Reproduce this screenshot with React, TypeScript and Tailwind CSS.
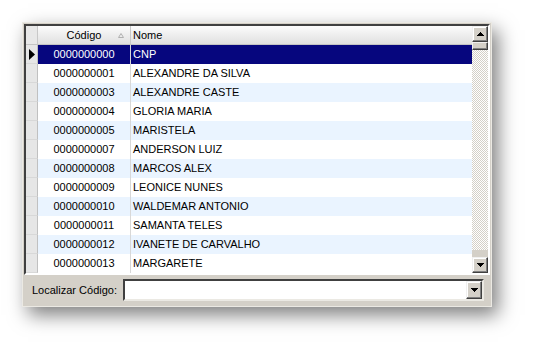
import React from "react";

const rows = [
  ["0000000000", "CNP"],
  ["0000000001", "ALEXANDRE DA SILVA"],
  ["0000000003", "ALEXANDRE CASTE"],
  ["0000000004", "GLORIA MARIA"],
  ["0000000005", "MARISTELA"],
  ["0000000007", "ANDERSON LUIZ"],
  ["0000000008", "MARCOS ALEX"],
  ["0000000009", "LEONICE NUNES"],
  ["0000000010", "WALDEMAR ANTONIO"],
  ["0000000011", "SAMANTA TELES"],
  ["0000000012", "IVANETE DE CARVALHO"],
  ["0000000013", "MARGARETE"],
];

function Arrow({ down }: { down?: boolean }) {
  return (
    <svg width="7" height="4" viewBox="0 0 7 4" shapeRendering="crispEdges">
      {down ? <polygon points="0,0 7,0 3.5,4" fill="#000" /> : <polygon points="0,4 7,4 3.5,0" fill="#000" />}
    </svg>
  );
}

function Btn({ down, h = 16 }: { down?: boolean; h?: number }) {
  return (
    <div
      className="w-[16px] bg-[#d4d0c8] border border-t-[#f0f0f0] border-l-[#f0f0f0] border-r-[#404040] border-b-[#404040] flex items-center justify-center shadow-[inset_-1px_-1px_0_#808080,inset_1px_1px_0_#ffffff]"
      style={{ height: h }}
    >
      <Arrow down={down} />
    </div>
  );
}

export default function App() {
  return (
    <div className="w-[535px] h-[350px] bg-white pt-[22px] pl-[22px]" style={{ fontFamily: '"Liberation Sans", Arial, sans-serif' }}>
      <div className="w-[470px] h-[285px] bg-[#d4d0c8] border border-[#ebe9e3] shadow-[6px_8px_18px_rgba(0,0,0,0.5)] flex flex-col p-[1px]">
        <div className="h-[251px] border-2 border-t-[#404040] border-l-[#404040] border-r-white border-b-white flex">
          <div className="flex-1 flex flex-col bg-white text-[11px] text-black">
            <div className="h-[19px] flex bg-gradient-to-b from-[#fcfcfc] to-[#e0e0e0] border-b border-[#c4c4c4]">
              <div className="w-[12px] border-r border-[#c8c8c8] bg-[#e8e8e8]" />
              <div className="w-[93px] border-r border-[#c8c8c8] relative flex items-center justify-center">
                <span>Código</span>
                <svg className="absolute right-[6px] top-[7px]" width="6" height="5" viewBox="0 0 6 5">
                  <polygon points="0.5,4.5 5.5,4.5 3,0.5" fill="none" stroke="#b0b0b0" strokeWidth="1" />
                </svg>
              </div>
              <div className="flex-1 flex items-center pl-[2px]">Nome</div>
            </div>
            {rows.map((r, i) => {
              const sel = i === 0;
              const bg = sel ? "bg-[#06067e] text-white" : i % 2 === 0 ? "bg-[#eaf4ff]" : "bg-white";
              return (
                <div key={i} className="h-[19px] flex">
                  <div className="w-[12px] bg-[#e6e6e6] border-r border-b border-r-[#c0c0c0] border-b-[#d8d8d8] flex items-center justify-center">
                    {sel && (
                      <svg width="6" height="11" viewBox="0 0 6 11">
                        <polygon points="0,0 6,5.5 0,11" fill="#000" />
                      </svg>
                    )}
                  </div>
                  <div className={`w-[93px] flex items-center justify-center border-r border-[#d8d8d8] ${bg}`}>{r[0]}</div>
                  <div className={`flex-1 flex items-center pl-[2px] ${bg}`}>{r[1]}</div>
                </div>
              );
            })}
          </div>
          <div className="w-[16px] flex flex-col">
            <Btn />
            <div className="w-[16px] h-[8px] bg-[#d4d0c8] border border-t-[#f0f0f0] border-l-[#f0f0f0] border-r-[#404040] border-b-[#404040] shadow-[inset_-1px_-1px_0_#808080]" />
            <div className="flex-1 overflow-hidden">
              <svg width="16" height="200" shapeRendering="crispEdges">
                <defs>
                  <pattern id="chk" width="2" height="2" patternUnits="userSpaceOnUse">
                    <rect width="2" height="2" fill="#ffffff" />
                    <rect width="1" height="1" fill="#d4d0c8" />
                    <rect x="1" y="1" width="1" height="1" fill="#d4d0c8" />
                  </pattern>
                </defs>
                <rect width="16" height="200" fill="url(#chk)" />
              </svg>
            </div>
            <Btn down />
          </div>
        </div>
        <div className="flex-1 flex items-center pl-[8px] pr-[6px] text-[11px] text-black">
          <span className="w-[91px] whitespace-nowrap">Localizar Código:</span>
          <div className="flex-1 h-[22px] bg-white border-2 border-t-[#404040] border-l-[#404040] border-r-[#ebe9e3] border-b-[#ebe9e3] flex justify-end items-center">
            <Btn down h={18} />
          </div>
        </div>
      </div>
    </div>
  );
}
